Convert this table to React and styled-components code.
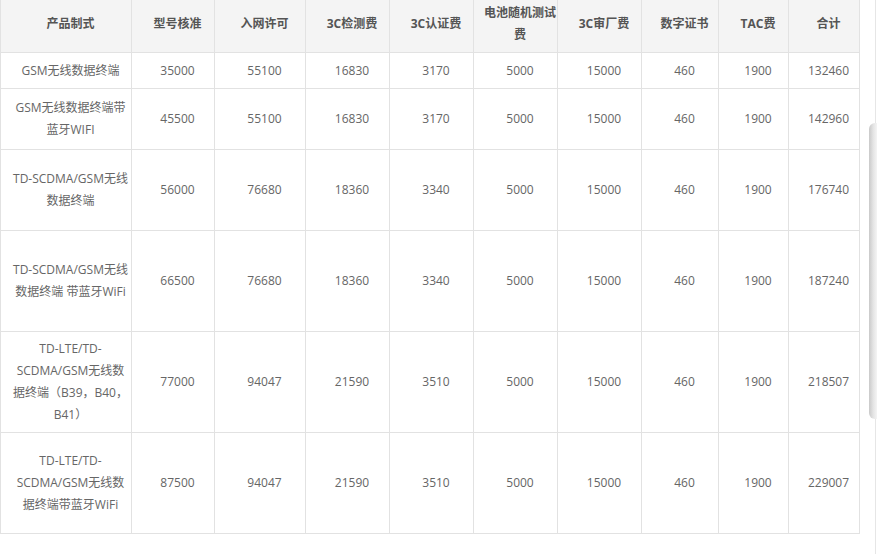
import React from "react";
import styled, { createGlobalStyle } from "styled-components";

const GlobalStyle = createGlobalStyle`
  html, body {
    margin: 0;
    padding: 0;
    background: #fff;
    overflow: hidden;
  }
  body {
    font-family: "Open Sans", "Noto Sans CJK SC", sans-serif;
    text-spacing-trim: space-all;
  }
`;

const Page = styled.div`
  position: relative;
  width: 877px;
  height: 554px;
  background: #fff;
`;

const Table = styled.table`
  width: 860px;
  border-collapse: collapse;
  table-layout: fixed;
  font-size: 12px;
  color: #666;
`;

const HeadCell = styled.th`
  height: 48px;
  padding: 0 0 4px 9px;
  background: #f4f4f4;
  border: 1px solid #e2e2e2;
  border-top: 0;
  font-weight: bold;
  color: #555;
  line-height: 22px;
  text-align: center;
  vertical-align: middle;
`;

const Cell = styled.td`
  height: ${(p) => p.$h - 1}px;
  padding: 0 0 0 9px;
  border: 1px solid #e2e2e2;
  line-height: 22px;
  text-align: center;
  vertical-align: middle;
  white-space: nowrap;
`;

const Track = styled.div`
  position: absolute;
  top: 0;
  bottom: 0;
  left: 875px;
  width: 1px;
  background: #e6e6e6;
`;

const Thumb = styled.div`
  position: absolute;
  left: 869px;
  top: 123px;
  width: 14px;
  height: 296px;
  border-radius: 6px;
  background: linear-gradient(to right, #c9c9c9 0%, #e4e4e4 30%, #f6f6f6 60%, #fbfbfb 100%);
`;

const widths = [131, 83, 91, 84, 84, 84, 84, 77, 70, 71];

const heads = [
  "产品制式",
  "型号核准",
  "入网许可",
  "3C检测费",
  "3C认证费",
  ["电池随机测试", "费"],
  "3C审厂费",
  "数字证书",
  "TAC费",
  "合计",
];

const rows = [
  { h: 36, name: ["GSM无线数据终端"], vals: ["35000", "55100", "16830", "3170", "5000", "15000", "460", "1900", "132460"] },
  { h: 61, name: ["GSM无线数据终端带", "蓝牙WIFI"], vals: ["45500", "55100", "16830", "3170", "5000", "15000", "460", "1900", "142960"] },
  { h: 81, name: ["TD-SCDMA/GSM无线", "数据终端"], vals: ["56000", "76680", "18360", "3340", "5000", "15000", "460", "1900", "176740"] },
  { h: 101, name: ["TD-SCDMA/GSM无线", "数据终端 带蓝牙WiFi"], vals: ["66500", "76680", "18360", "3340", "5000", "15000", "460", "1900", "187240"] },
  { h: 101, name: ["TD-LTE/TD-", "SCDMA/GSM无线数", "据终端（B39，B40，", "B41）"], vals: ["77000", "94047", "21590", "3510", "5000", "15000", "460", "1900", "218507"] },
  { h: 101, name: ["TD-LTE/TD-", "SCDMA/GSM无线数", "据终端带蓝牙WiFi"], vals: ["87500", "94047", "21590", "3510", "5000", "15000", "460", "1900", "229007"] },
];

const Lines = ({ parts }) =>
  parts.map((t, i) => (
    <React.Fragment key={i}>
      {i > 0 && <br />}
      {t}
    </React.Fragment>
  ));

export default function App() {
  return (
    <Page>
      <GlobalStyle />
      <Table>
        <colgroup>
          {widths.map((w, i) => (
            <col key={i} style={{ width: w }} />
          ))}
        </colgroup>
        <thead>
          <tr>
            {heads.map((h, i) => (
              <HeadCell key={i}>{Array.isArray(h) ? <Lines parts={h} /> : h}</HeadCell>
            ))}
          </tr>
        </thead>
        <tbody>
          {rows.map((r, i) => (
            <tr key={i}>
              <Cell $h={r.h}>
                <Lines parts={r.name} />
              </Cell>
              {r.vals.map((v, j) => (
                <Cell key={j} $h={r.h}>
                  {v}
                </Cell>
              ))}
            </tr>
          ))}
        </tbody>
      </Table>
      <Track />
      <Thumb />
    </Page>
  );
}
